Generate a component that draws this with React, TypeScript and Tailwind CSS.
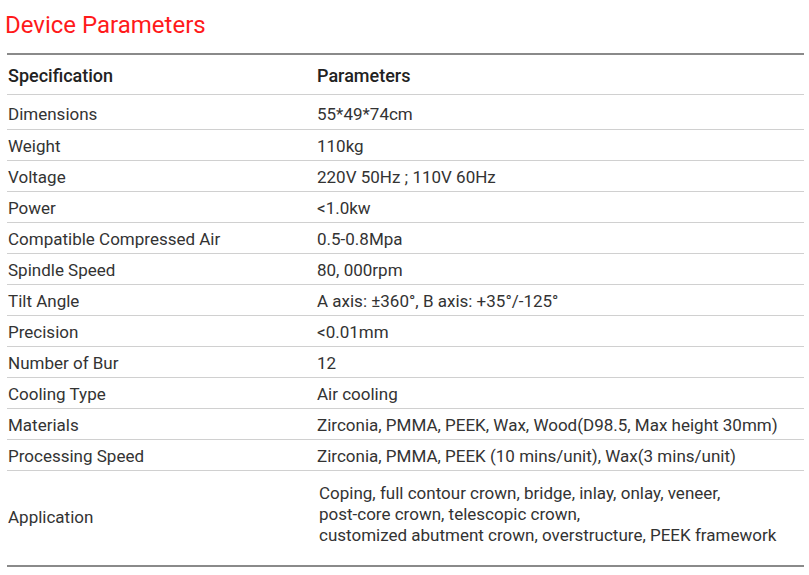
import React from 'react';

const rows: [string, string][] = [
  ['Dimensions', '55*49*74cm'],
  ['Weight', '110kg'],
  ['Voltage', '220V 50Hz ; 110V 60Hz'],
  ['Power', '<1.0kw'],
  ['Compatible Compressed Air', '0.5-0.8Mpa'],
  ['Spindle Speed', '80, 000rpm'],
  ['Tilt Angle', 'A axis: ±360°, B axis: +35°/-125°'],
  ['Precision', '<0.01mm'],
  ['Number of Bur', '12'],
  ['Cooling Type', 'Air cooling'],
  ['Materials', 'Zirconia, PMMA, PEEK, Wax, Wood(D98.5, Max height 30mm)'],
  ['Processing Speed', 'Zirconia, PMMA, PEEK (10 mins/unit), Wax(3 mins/unit)'],
];

const App: React.FC = () => {
  return (
    <div className="min-h-screen bg-white font-['Roboto',sans-serif] text-[#333]">
      <h2 className="pl-[5px] pt-[11px] text-[24px] leading-[28px] text-[#ff1a1a]">Device Parameters</h2>

      <div className="ml-[7px] mr-[5px] mt-[14px] border-t-2 border-b-2 border-[#8a8a8a]">
        {/* header */}
        <div className="flex h-[40px] items-center border-b border-[#d0d0d0] pt-[1px] text-[18px] font-medium text-[#222]">
          <div className="w-[308px] pl-[1px]">Specification</div>
          <div className="flex-1 pl-[2px]">Parameters</div>
        </div>

        {rows.map(([spec, value], i) => (
          <div
            key={spec}
            className={`flex items-center border-b border-[#d0d0d0] text-[17px] ${
              i === 0 ? 'h-[35px] pt-[6px]' : 'h-[31px] pt-[3px]'
            }`}
          >
            <div className="w-[308px] pl-[1px]">{spec}</div>
            <div className="flex-1 pl-[2px]">{value}</div>
          </div>
        ))}

        {/* application row */}
        <div className="flex h-[94px] items-center text-[17px]">
          <div className="w-[308px] pl-[1px]">Application</div>
          <div className="flex-1 pl-[4px] pb-[8px] leading-[21px]">
            Coping, full contour crown, bridge, inlay, onlay, veneer,
            <br />
            post-core crown, telescopic crown,
            <br />
            customized abutment crown, overstructure, PEEK framework
          </div>
        </div>
      </div>
    </div>
  );
};

export default App;
